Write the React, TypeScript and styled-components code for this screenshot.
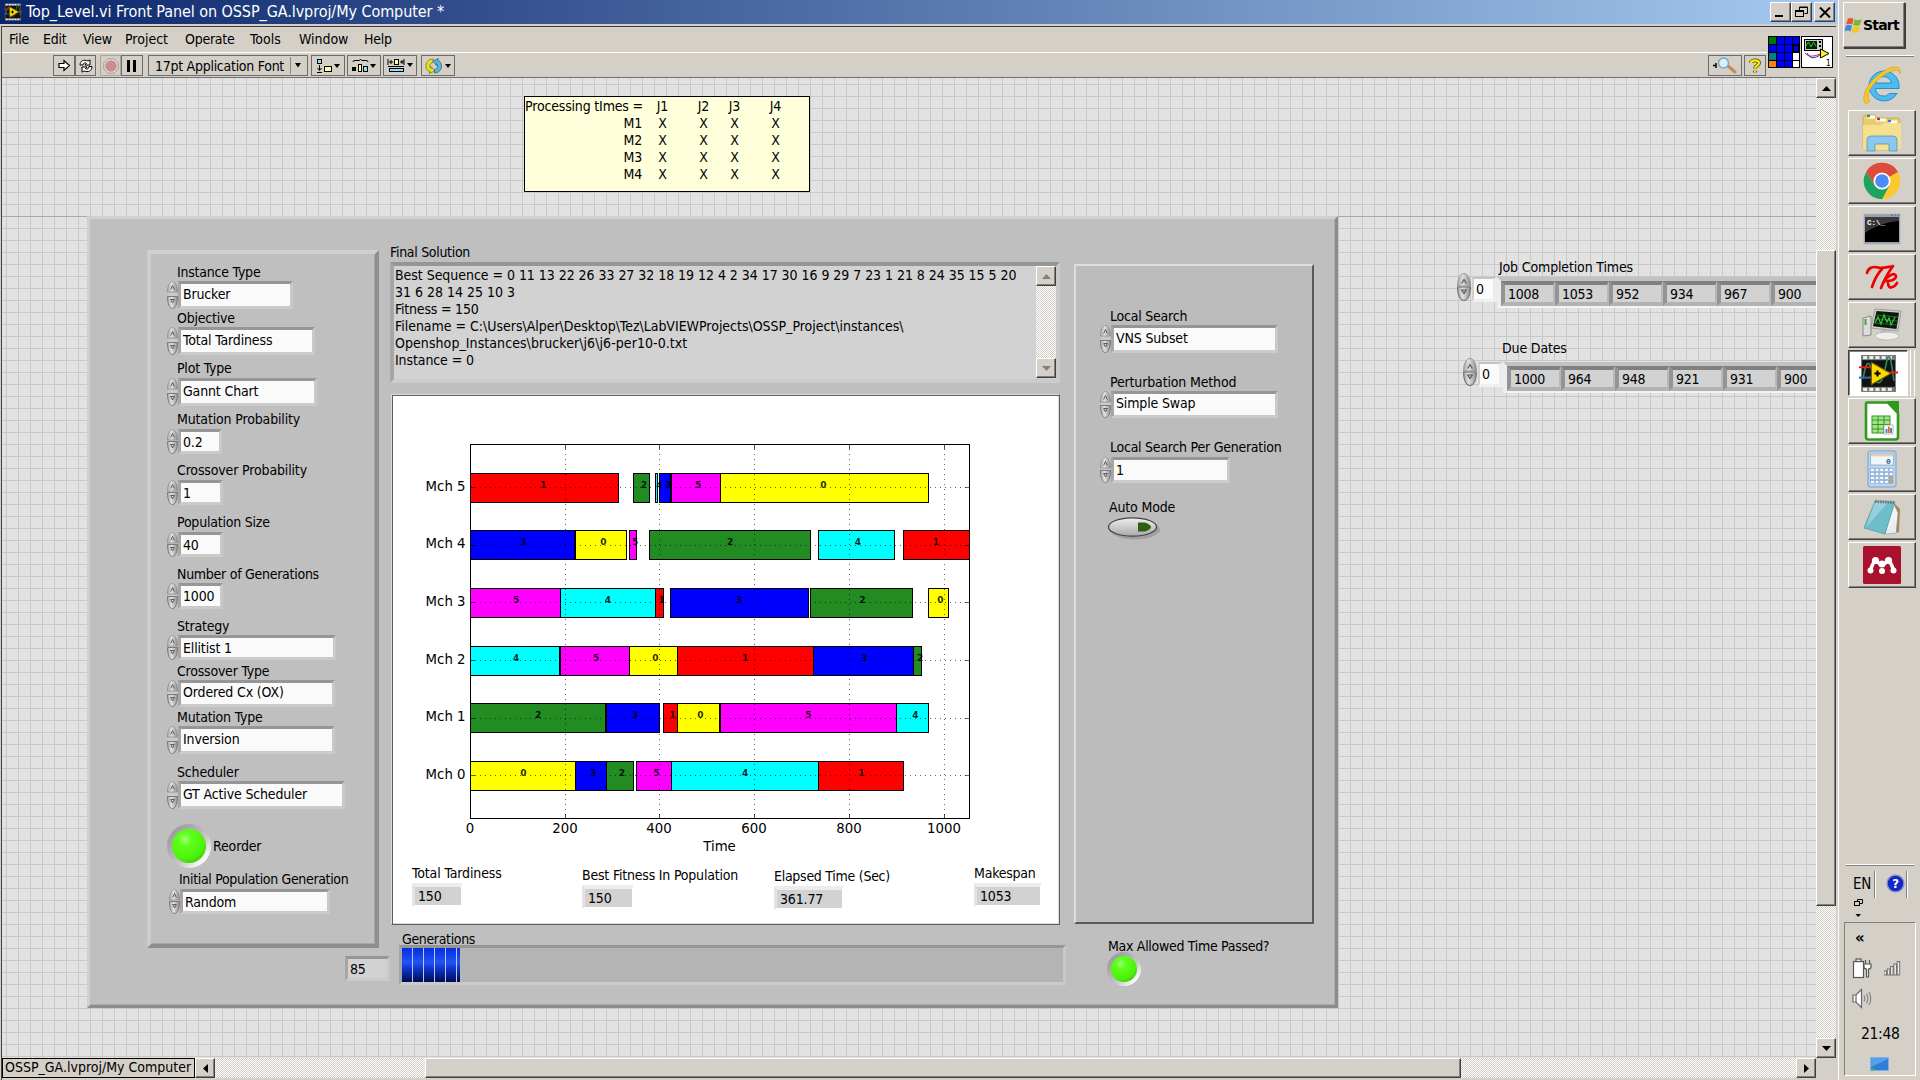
import React from "react";
import styled, { createGlobalStyle, css } from "styled-components";

const FACE = "#d4d0c8";
const UI_FONT = `"DejaVu Sans Condensed", "DejaVu Sans", "Noto Sans", sans-serif`;

const Global = createGlobalStyle`
  * { box-sizing: border-box; }
  html, body { margin: 0; padding: 0; overflow: hidden; background: ${FACE}; }
  body { font: 14px/18px ${UI_FONT}; font-stretch: condensed; letter-spacing: -0.15px; color: #000; cursor: default; }
  svg { display: block; }
`;

const raised = css`
  background: ${FACE};
  border: 1px solid;
  border-color: #fff #404040 #404040 #fff;
  box-shadow: inset -1px -1px 0 #808080;
`;
const dither = css`
  background: repeating-conic-gradient(#fff 0 25%, ${FACE} 0 50%) 0 0 / 2px 2px;
`;

/* ---------- shell ---------- */
const Screen = styled.div`
  display: flex;
  width: 1920px;
  height: 1080px;
  background: ${FACE};
  overflow: hidden;
`;
const Win = styled.div`
  display: flex;
  flex-direction: column;
  width: 1838px;
  flex: none;
  height: 1080px;
`;
const TitleBar = styled.div`
  display: flex;
  align-items: center;
  height: 24px;
  flex: none;
  padding: 0 3px 0 4px;
  background: linear-gradient(to right, #0a246a, #a6caf0);
  color: #fff;
`;
const Title = styled.div`
  flex: 1;
  margin-left: 4px;
  font-size: 16px;
  letter-spacing: -0.07px;
  white-space: pre;
  line-height: 24px;
`;
const CapButton = styled.div<{ $gap?: number }>`
  ${raised}
  width: 21px;
  height: 20px;
  margin-left: ${(p) => p.$gap ?? 0}px;
  display: flex;
  align-items: center;
  justify-content: center;
`;
const Frame = styled.div`
  display: flex;
  flex-direction: column;
  height: 1054px;
  margin: 2px 2px 0 1px;
  border-left: 1px solid #404040;
  border-top: 1px solid #404040;
`;
const HeadRow = styled.div`
  display: flex;
  height: 51px;
  flex: none;
  border-bottom: 1px solid #707070;
`;
const Bars = styled.div`
  flex: 1;
`;
const MenuBar = styled.div`
  display: flex;
  height: 26px;
  padding: 0 0 2px 7px;
  align-items: center;
  border-bottom: 1px solid #fff;
`;
const MenuItem = styled.div<{ $w: number; $ls?: number }>`
  width: ${(p) => p.$w}px;
  letter-spacing: ${(p) => p.$ls ?? -0.25}px;
`;
const ToolBar = styled.div`
  display: flex;
  height: 24px;
  padding: 2px 1px 0 51px;
`;
const ToolButton = styled.div<{ $w: number; $gap?: number; $soft?: boolean }>`
  display: flex;
  align-items: center;
  justify-content: center;
  width: ${(p) => p.$w}px;
  height: 21px;
  margin-left: ${(p) => p.$gap ?? 0}px;
  border: 1px solid ${(p) => (p.$soft ? "#aaa69e" : "#6e6c68")};
`;
const FontName = styled.div`
  flex: 1;
  padding-left: 6px;
  letter-spacing: -0.27px;
  white-space: nowrap;
`;
const FontSplit = styled.div`
  width: 17px;
  height: 17px;
  padding: 6px 0 0 4px;
  border-left: 1px solid #888;
`;
const Spacer = styled.div`
  flex: 1;
`;
const PaneIcons = styled.div`
  display: flex;
  gap: 1px;
  padding: 9px 3px 0 1px;
  width: 69px;
`;
const Body = styled.div`
  display: flex;
  height: 980px;
`;
const Canvas = styled.div`
  width: 1814px;
  height: 980px;
  overflow: hidden;
  background-color: #e2e2e2;
  background-image: linear-gradient(#a9a9a9, #a9a9a9), linear-gradient(to right, #c8c8c8 1px, transparent 1px),
    linear-gradient(#c8c8c8 1px, transparent 1px);
  background-size: 100% 1px, 12px 12px, 12px 12px;
  background-position: 0 138px, 4px 0, 0 6px;
  background-repeat: no-repeat, repeat, repeat;
`;
const VScroll = styled.div<{ $h: number; $w: number }>`
  display: flex;
  flex-direction: column;
  width: ${(p) => p.$w}px;
  height: ${(p) => p.$h}px;
  flex: none;
  ${dither}
`;
const ScrollButton = styled.div<{ $w?: number; $h?: number }>`
  ${raised}
  display: flex;
  align-items: center;
  justify-content: center;
  width: ${(p) => p.$w ?? 20}px;
  height: ${(p) => p.$h ?? 20}px;
  flex: none;
`;
const VThumb = styled.div`
  ${raised}
  height: 656px;
  margin: 152px 0 131px;
`;
const Footer = styled.div`
  display: flex;
  height: 20px;
`;
const Context = styled.div`
  width: 193px;
  height: 20px;
  border: 1px solid #000;
  padding-left: 2px;
  line-height: 17px;
  letter-spacing: 0;
  white-space: nowrap;
  overflow: hidden;
`;
const HTrack = styled.div`
  width: 1581px;
  padding-left: 210px;
  ${dither}
`;
const HThumb = styled.div`
  ${raised}
  width: 1036px;
  height: 20px;
`;

/* ---------- front panel ---------- */
const Note = styled.div`
  display: grid;
  grid-template-columns: 117px 41px 41px 21px 61px;
  grid-auto-rows: 17px;
  width: 286px;
  height: 96px;
  margin: 18px 0 24px 522px;
  padding-top: 1px;
  border: 1px solid #000;
  background: #ffffdc;
  text-align: center;
  line-height: 17px;
  letter-spacing: -0.17px;
  white-space: nowrap;
`;
const NoteHead = styled.div`
  text-align: right;
`;
const Stage = styled.div`
  display: flex;
  padding-left: 85px;
`;
const Panel = styled.div`
  display: flex;
  flex: none;
  width: 1251px;
  height: 792px;
  padding-left: 57px;
  background: #bfbfbf;
  border: 3px solid;
  border-color: #d0d0d0 #8c8c8c #8c8c8c #cfcfcf;
  box-shadow: inset -1px -1px 0 #acacac;
`;
const Column = styled.div<{ $w: number; $top: number }>`
  display: flex;
  flex-direction: column;
  flex: none;
  width: ${(p) => p.$w}px;
  padding-top: ${(p) => p.$top}px;
`;
const Group = styled.div<{ $w: number; $h: number; $flat?: boolean }>`
  display: flex;
  flex-direction: column;
  flex: none;
  width: ${(p) => p.$w}px;
  height: ${(p) => p.$h}px;
  ${(p) =>
    p.$flat
      ? css`
          padding-left: 24px;
          background: #bcbcbc;
          border: 2px solid;
          border-color: #dedede #5a5a5a #5a5a5a #dedede;
        `
      : css`
          padding-left: 16px;
          border: 4px solid;
          border-color: #d0d0d0 #8e8e8e #8e8e8e #cccccc;
          box-shadow: inset -1px -1px 0 #a8a8a8;
        `}
`;
const Ctl = styled.div<{ $gap: number; $shift?: number }>`
  margin-top: ${(p) => p.$gap}px;
  margin-left: ${(p) => p.$shift ?? 0}px;
`;
const Label = styled.div<{ $x?: number; $h?: number; $ls?: number; $gap?: number }>`
  height: ${(p) => p.$h ?? 18}px;
  line-height: 18px;
  margin-left: ${(p) => p.$x ?? 0}px;
  margin-top: ${(p) => p.$gap ?? 0}px;
  letter-spacing: ${(p) => p.$ls ?? -0.22}px;
  white-space: nowrap;
  flex: none;
`;
const CtlRow = styled.div`
  display: flex;
`;
const Field = styled.div<{ $w: number; $h: number; $grey?: boolean }>`
  display: flex;
  align-items: center;
  width: ${(p) => p.$w}px;
  height: ${(p) => p.$h}px;
  padding: 0 0 ${(p) => (p.$h >= 27 ? 3 : 0)}px 2px;
  flex: none;
  white-space: nowrap;
  background: ${(p) => (p.$grey ? "#d2d2d2" : "#fafafa")};
  border: 3px solid;
  border-top-color: #969696;
  border-left-color: #a6a6a6;
  border-right-color: #c9c9c9;
  border-bottom-color: #cbcbcb;
`;
const Counter = styled.div`
  align-self: flex-end;
  margin-top: 8px;
`;
const LedRow = styled.div`
  display: flex;
  align-items: center;
  height: 44px;
  margin-top: 15px;
  gap: 2px;
`;
const Led = styled.div<{ $size: number }>`
  display: flex;
  width: ${(p) => p.$size}px;
  height: ${(p) => p.$size}px;
  padding: ${(p) => Math.round(p.$size * 0.11)}px;
  border-radius: 50%;
  background: linear-gradient(135deg, #9a9a9a 12%, #b8b8b8 45%, #c8c8c8 60%, #ffffff 86%);
  &::before {
    content: "";
    flex: 1;
    border-radius: 50%;
    background: radial-gradient(circle at 38% 30%, #9cff78 0, #5cff1a 22%, #4df20c 62%, #35b804 88%, #2a9a02 100%);
  }
`;
const Message = styled.div`
  display: flex;
  width: 670px;
  height: 121px;
  margin-top: 1px;
  background: #d2d2d2;
  border: 4px solid;
  border-color: #969696 #c9c9c9 #cbcbcb #a6a6a6;
`;
const MessageText = styled.div`
  flex: 1;
  padding: 1px 0 0 1px;
  line-height: 17px;
  white-space: pre;
  overflow: hidden;
`;
const MessageLine = styled.div<{ $ls: number }>`
  letter-spacing: ${(p) => p.$ls}px;
`;
const Picture = styled.div`
  width: 669px;
  height: 531px;
  margin: 11px 0 0 1px;
  background: #fff;
  border: 1px solid;
  border-color: #dcdcdc #5e5e5e #5e5e5e #dcdcdc;
  box-shadow: inset 1px 1px 0 #5e5e5e, inset -1px -1px 0 #dcdcdc;
  padding: 1px;
`;
const Readouts = styled.div`
  display: flex;
  padding-left: 19px;
`;
const Readout = styled.div<{ $w: number; $top: number }>`
  width: ${(p) => p.$w}px;
  padding-top: ${(p) => p.$top}px;
`;
const Value = styled.div<{ $w: number }>`
  display: flex;
  align-items: center;
  width: ${(p) => p.$w}px;
  height: 24px;
  padding-left: 3px;
  background: #d2d2d2;
  border: solid;
  border-width: 4px 2px 2px 3px;
  border-color: #ececec #fff #fff #e4e4e4;
`;
const Progress = styled.div`
  display: flex;
  width: 667px;
  height: 40px;
  margin-left: 9px;
  background: #b4b4b4;
  border: 3px solid;
  border-color: #969696 #c9c9c9 #cbcbcb #a6a6a6;
`;
const ProgressFill = styled.div`
  width: 58px;
  background: repeating-linear-gradient(to right, transparent 0 10px, #b9c6ee 10px 11px),
    linear-gradient(#0a2de0 0%, #0f3de8 18%, #2453f4 42%, #0f35cc 60%, #041a80 85%, #020c50 100%);
`;
const Arrays = styled.div`
  padding: 42px 0 0 119px;
`;
const ArrayBlock = styled.div<{ $gap?: number; $x?: number }>`
  margin-top: ${(p) => p.$gap ?? 0}px;
  margin-left: ${(p) => p.$x ?? 0}px;
`;
const ArrayRow = styled.div<{ $gap?: number }>`
  display: flex;
  margin-top: ${(p) => p.$gap ?? 0}px;
`;
const Index = styled.div`
  width: 25px;
  height: 25px;
  margin: 4px 0 0 1px;
  padding-left: 2px;
  line-height: 21px;
  background: #fbfbfb;
  border: solid;
  border-width: 2px 4px 3px 2px;
  border-color: #c4c4c4 #ececec #f0f0f0 #d0d0d0;
`;
const ArrayShell = styled.div`
  display: flex;
  height: 31px;
  margin-top: 4px;
  border: solid;
  border-width: 4px 4px 2px 4px;
  border-color: #c2c2c2 #f2f2f2 #f2f2f2 #ededed;
`;
const Cell = styled.div`
  width: 54px;
  height: 25px;
  flex: none;
  padding-left: 3px;
  line-height: 18px;
  letter-spacing: -0.3px;
  background: #d2d2d2;
  border: solid;
  border-width: 4px 2px 4px 4px;
  border-color: #808080 #b8b8b8 #b2b2b2 #949494;
`;

/* ---------- taskbar ---------- */
const Taskbar = styled.div`
  display: flex;
  flex-direction: column;
  width: 82px;
  height: 1080px;
  padding: 2px 4px 4px 4px;
  border-left: 1px solid #fff;
`;
const StartButton = styled.div`
  ${raised}
  display: flex;
  align-items: center;
  width: 62px;
  height: 46px;
  font: bold 14px "DejaVu Sans", sans-serif;
  letter-spacing: -0.8px;
  box-shadow: inset -1px -1px 0 #808080, 1px 1px 0 #404040;
`;
const Groove = styled.div<{ $top: number }>`
  width: 68px;
  height: 2px;
  flex: none;
  margin: ${(p) => p.$top}px 0 0 3px;
  border-top: 1px solid #fff;
  border-bottom: 1px solid #808080;
`;
const Launch = styled.div`
  height: 53px;
  padding: 8px 0 0 19px;
`;
const Tasks = styled.div`
  display: flex;
  flex-direction: column;
  gap: 2px;
  padding-left: 5px;
`;
const Task = styled.div<{ $on?: boolean }>`
  display: flex;
  align-items: center;
  justify-content: center;
  width: 68px;
  height: 46px;
  ${raised}
  ${(p) =>
    p.$on &&
    css`
      width: 60px;
      background: #fff;
      border-color: #404040 #fff #fff #404040;
      box-shadow: inset 1px 1px 0 #808080, 2px 0 0 ${FACE}, 3px 0 0 #fff, 6px 0 0 ${FACE}, 7px 0 0 #fff;
    `}
`;
const LangRow = styled.div`
  display: flex;
  height: 27px;
  margin-top: 5px;
  padding-left: 10px;
`;
const Lang = styled.div`
  width: 22px;
  font: 15px/27px ${UI_FONT};
  letter-spacing: -0.4px;
  border-right: 1px solid #808080;
  box-shadow: 1px 0 0 #fff;
`;
const HelpSlot = styled.div`
  width: 32px;
  padding: 3px 0 0 11px;
  border-right: 1px solid #808080;
  box-shadow: 1px 0 0 #fff;
`;
const LangTools = styled.div`
  height: 24px;
  padding: 1px 0 0 11px;
`;
const Tray = styled.div`
  display: grid;
  grid-template-columns: 32px 32px;
  grid-template-rows: 35px 30px 38px 28px 20px;
  width: 72px;
  height: 154px;
  margin-left: 1px;
  padding-left: 7px;
  border: 1px solid;
  border-color: #808080 #fff #fff #808080;
`;
const Wide = styled.div`
  grid-column: 1 / 3;
`;
const Chevron = styled(Wide)`
  padding: 5px 0 0 3px;
  font: bold 15px/20px "DejaVu Sans", sans-serif;
`;
const Clock = styled(Wide)`
  padding-left: 9px;
  font: 15.5px/17px ${UI_FONT};
  letter-spacing: -0.35px;
`;
const DesktopSlot = styled(Wide)`
  padding: 3px 0 0 18px;
`;

/* ---------- pieces ---------- */
const Tri = ({ dir, c = "#000", s = 9 }: { dir: "u" | "d" | "l" | "r"; c?: string; s?: number }) => {
  const pts = { u: "0,7 4.5,2 9,7", d: "0,2 9,2 4.5,7", l: "7,0 2,4.5 7,9", r: "2,0 7,4.5 2,9" }[dir];
  return (
    <svg width={s} height={s} viewBox="0 0 9 9">
      <polygon points={pts} fill={c} />
    </svg>
  );
};

const Spinner = ({ h, w = 12, joined }: { h: number; w?: number; joined?: boolean }) => {
  const m = joined ? h / 2 : 11.5;
  const b = joined ? h / 2 : h - 12;
  return (
    <svg width={w} height={h + 1} viewBox={`0 0 12 ${h + 1}`} preserveAspectRatio="none">
      <defs>
        <linearGradient id="knob" x1="0" x2="1">
          <stop offset="0" stopColor="#a8a8a8" />
          <stop offset=".4" stopColor="#e0e0e0" />
          <stop offset="1" stopColor="#8e8e8e" />
        </linearGradient>
      </defs>
      {!joined && <rect x="1" y={m} width="10" height={b - m} fill="#cacaca" />}
      <path d={`M0.5 ${m - 0.5} C0.5 5 3 .5 6 .5 S11.5 5 11.5 ${m - 0.5} Z`} fill="url(#knob)" stroke="#8a8a8a" strokeWidth=".7" />
      <path d={`M0.5 ${b + 0.5} C0.5 ${h - 4} 3 ${h + 0.5} 6 ${h + 0.5} S11.5 ${h - 4} 11.5 ${b + 0.5} Z`} fill="url(#knob)" stroke="#707070" strokeWidth=".9" />
      <path d={`M4 ${m - 3} L6 ${m - 7} L8 ${m - 3}`} fill="none" stroke="#555" />
      <path d={`M4 ${b + 3.5} L6 ${b + 7} L8 ${b + 3.5} Z`} fill="none" stroke="#555" />
    </svg>
  );
};

/* lh is the caption height, which includes any space left above the field */
type ControlProps = { label: string; value: string; gap: number; w: number; h: number; shift?: number; ls?: number; lh?: number };
const Control = ({ label, value, gap, w, h, shift, ls, lh }: ControlProps) => (
  <Ctl $gap={gap} $shift={shift}>
    <Label $x={10} $ls={ls} $h={lh}>{label}</Label>
    <CtlRow>
      <Spinner h={h - 1} w={11} />
      <Field $w={w} $h={h}>{value}</Field>
    </CtlRow>
  </Ctl>
);

const settings: ControlProps[] = [
  { label: "Instance Type", value: "Brucker", gap: 9, w: 115, h: 28 },
  { label: "Objective", value: "Total Tardiness", gap: 0, w: 137, h: 28 },
  { label: "Plot Type", value: "Gannt Chart", gap: 4, w: 139, h: 28, lh: 19 },
  { label: "Mutation Probability", value: "0.2", gap: 4, w: 44, h: 25, lh: 19, ls: -0.15 },
  { label: "Crossover Probability", value: "1", gap: 7, w: 45, h: 25, lh: 19, ls: -0.15 },
  { label: "Population Size", value: "40", gap: 8, w: 45, h: 25, lh: 19 },
  { label: "Number of Generations", value: "1000", gap: 8, w: 45, h: 26, ls: -0.27 },
  { label: "Strategy", value: "Ellitist 1", gap: 8, w: 158, h: 25 },
  { label: "Crossover Type", value: "Ordered Cx (OX)", gap: 2, w: 157, h: 27 },
  { label: "Mutation Type", value: "Inversion", gap: 1, w: 157, h: 28 },
  { label: "Scheduler", value: "GT Active Scheduler", gap: 9, w: 167, h: 28, ls: -0.15 },
];

const searchSettings: ControlProps[] = [
  { label: "Local Search", value: "VNS Subset", gap: 41, w: 167, h: 28 },
  { label: "Perturbation Method", value: "Simple Swap", gap: 20, w: 167, h: 27, ls: -0.15 },
  { label: "Local Search Per Generation", value: "1", gap: 20, w: 119, h: 26, lh: 19, ls: -0.25 },
];

/* each bar: left edge, right edge, job number, x of its caption */
type Bar = [number, number, number, number];
const JOB = ["#ffff00", "#ff0000", "#228b22", "#0000ff", "#00ffff", "#ff00ff"];
const machines: { name: string; y: number; top: number; bars: Bar[] }[] = [
  { name: "Mch 5", y: 487.5, top: 473.5, bars: [[470.5, 618.5, 1, 543.3], [633.5, 649.5, 2, 644], [655.5, 657.5, 4, 659.5], [659.5, 670.5, 3, 668.3], [671.5, 720.5, 5, 698.2], [720.5, 928.5, 0, 823.3]] },
  { name: "Mch 4", y: 545.5, top: 530.5, bars: [[470.5, 574.5, 3, 523.3], [575.5, 626.5, 0, 603.3], [629.5, 636.5, 5, 635.2], [649.5, 810.5, 2, 730.2], [818.5, 894.5, 4, 858], [903.5, 969.5, 1, 936]] },
  { name: "Mch 3", y: 602.5, top: 588.5, bars: [[470.5, 560.5, 5, 516.2], [560.5, 655.5, 4, 608], [655.5, 663.5, 1, 661.3], [670.5, 808.5, 3, 739.2], [810.5, 912.5, 2, 862.3], [928.5, 948.5, 0, 940.3]] },
  { name: "Mch 2", y: 660.5, top: 646.5, bars: [[470.5, 559.5, 4, 516.2], [560.5, 629.5, 5, 596.2], [629.5, 677.5, 0, 655.3], [677.5, 813.5, 1, 745.2], [813.5, 913.5, 3, 864.2], [913.5, 921.5, 2, 920.2]] },
  { name: "Mch 1", y: 718.5, top: 703.5, bars: [[470.5, 605.5, 2, 538.2], [606.5, 659.5, 3, 635.2], [663.5, 677.5, 1, 672.4], [677.5, 719.5, 0, 700.3], [720.5, 896.5, 5, 808.3], [896.5, 928.5, 4, 915.3]] },
  { name: "Mch 0", y: 775.5, top: 761.5, bars: [[470.5, 575.5, 0, 523.3], [575.5, 606.5, 3, 593.3], [606.5, 633.5, 2, 622], [636.5, 671.5, 5, 656.4], [671.5, 818.5, 4, 745.2], [818.5, 903.5, 1, 861.4]] },
];
const ticks: [number, string][] = [[470.5, "0"], [565.5, "200"], [659.5, "400"], [754.5, "600"], [849.5, "800"], [944.5, "1000"]];

const ChartSvg = styled.svg`
  font: 13.3px "DejaVu Sans", sans-serif;
  font-stretch: normal;
  letter-spacing: 0;
`;
const BarCaptions = styled.g`
  font-size: 9px;
  font-weight: bold;
  text-anchor: middle;
  fill-opacity: 0.85;
`;

const Gantt = () => (
  <ChartSvg width="665" height="464" viewBox="393 396 665 464">
    {machines.map((m) => (
      <g key={m.name}>
        {m.bars.map(([a, b, j], i) => (
          <rect key={i} x={a} y={m.top} width={b - a} height={29} fill={JOB[j]} stroke="#000" />
        ))}
        <line x1="470" x2="969" y1={m.y} y2={m.y} stroke="#000" strokeOpacity=".6" strokeDasharray="1 4" />
        <line x1="470" x2="475" y1={m.y} y2={m.y} stroke="#000" strokeOpacity=".6" />
        <line x1="965" x2="970" y1={m.y} y2={m.y} stroke="#000" strokeOpacity=".6" />
        <text x="465.5" y={m.top + 17.4} textAnchor="end">{m.name}</text>
      </g>
    ))}
    {ticks.map(([x, t]) => (
      <g key={t}>
        {t !== "0" && <line x1={x} x2={x} y1="444" y2="818" stroke="#000" strokeOpacity=".6" strokeDasharray="1 4" />}
        <line x1={x} x2={x} y1="445" y2="449" stroke="#000" strokeOpacity=".7" />
        <line x1={x} x2={x} y1="814" y2="818" stroke="#000" strokeOpacity=".7" />
        <text x={x - 0.5} y="833.3" textAnchor="middle">{t}</text>
      </g>
    ))}
    <BarCaptions>
      {machines.map((m) => m.bars.map(([, , j, c], i) => <text key={m.name + i} x={c} y={m.top + 14.7}>{j}</text>))}
    </BarCaptions>
    <rect x="470.5" y="444.5" width="499" height="374" fill="none" stroke="#000" />
    <text x="719.5" y="851" textAnchor="middle">Time</text>
  </ChartSvg>
);

const readouts = [
  { label: "Total Tardiness", value: "150", col: 170, top: 4, w: 51, ls: -0.12 },
  { label: "Best Fitness In Population", value: "150", col: 192, top: 6, w: 52, ls: -0.2 },
  { label: "Elapsed Time (Sec)", value: "361.77", col: 200, top: 7, w: 70, ls: -0.27 },
  { label: "Makespan", value: "1053", col: 80, top: 4, w: 68, ls: -0.22 },
];

const ArrayView = ({ label, labelX, gap, x, rowGap, values }: { label: string; labelX: number; gap?: number; x?: number; rowGap?: number; values: string[] }) => (
  <ArrayBlock $gap={gap} $x={x}>
    <Label $x={labelX} $h={15} $ls={-0.15}>{label}</Label>
    <ArrayRow $gap={rowGap}>
      <Spinner h={27} w={14} joined />
      <Index>0</Index>
      <ArrayShell>
        {values.map((v, i) => <Cell key={i}>{v}</Cell>)}
      </ArrayShell>
    </ArrayRow>
  </ArrayBlock>
);

/* ---------- icons ---------- */
const FilmIcon = ({ s }: { s: number }) => (
  <svg width={s} height={s} viewBox="0 0 38 38">
    <rect x="2" y="1" width="34" height="36" fill="#777" />
    {[4, 10, 16, 22, 28].map((x) => (
      <g key={x} fill="#eee">
        <rect x={x} y="2" width="4" height="3" />
        <rect x={x} y="33" width="4" height="3" />
      </g>
    ))}
    <rect x="3" y="6" width="32" height="26" fill="#111" />
    <path d="M4 24 C8 0 11 10 14 20 S22 34 26 12 S32 12 34 26" fill="none" stroke="#2d8a5c" strokeWidth="1.6" />
    <path d="M0 13 H12 M28 18 H38" stroke="#e02020" strokeWidth="2" />
    <path d="M0 23 H12" stroke="#2a6cb0" strokeWidth="2" />
    <polygon points="12,8 31,19 12,30" fill="#ffd800" stroke="#6a5a00" />
    <path d="M15 19 H21 M18 16 V22" stroke="#000" strokeWidth="2" />
  </svg>
);
const DropTri = () => (
  <svg width="6" height="5" viewBox="0 0 6 5"><polygon points="0,0 6,0 3,4.5" fill="#000" /></svg>
);
const RunIcon = () => (
  <svg width="13" height="13" viewBox="0 0 13 13"><path d="M1 4.5 H6 V1.5 L11.5 6.5 L6 11.5 V8.5 H1 Z" fill="#fff" stroke="#000" strokeWidth="1.2" /></svg>
);
const LoopIcon = () => (
  <svg width="16" height="14" viewBox="0 0 16 14" fill="#fff" stroke="#000">
    <path d="M2 6 C2 2 6 0 10 2 L12 .8 V6 H7 L8.6 4.4 C7 3.4 5 4 5 6 Z" />
    <path d="M14 7.5 C14 12 10 13.6 6 12 L4 13.2 V8 H9 L7.4 9.6 C9 10.6 11 10 11 7.5 Z" />
  </svg>
);
const AbortIcon = () => (
  <svg width="16" height="16" viewBox="0 0 16 16"><path d="M5 .8 H11 L15.2 5 V11 L11 15.2 H5 L.8 11 V5 Z" fill="#e4dcd8" stroke="#a09a94" /><circle cx="8" cy="8" r="5.8" fill="#c98f8f" /></svg>
);
const PauseIcon = () => (
  <svg width="10" height="12" viewBox="0 0 10 12"><rect x="0" y="0" width="3" height="12" /><rect x="6" y="0" width="3" height="12" /></svg>
);
const AlignIcon = () => (
  <svg width="24" height="14" viewBox="0 0 24 14">
    <rect x="1.5" y=".5" width="4" height="4" fill="#8fe0f4" stroke="#000" />
    <path d="M3.5 6 V11 M1.5 9 L3.5 11.5 L5.5 9 M1 13.5 H6" stroke="#000" fill="none" />
    <rect x="8.5" y="7.5" width="7" height="5" fill="#ffffb0" stroke="#000" />
    <polygon points="18,5 24,5 21,9" />
  </svg>
);
const DistributeIcon = () => (
  <svg width="24" height="14" viewBox="0 0 24 14">
    <path d="M1 3 Q1 1.5 3 1.5 H7 L8.500 .5 L10 1.5 H14 Q16 1.5 16 3" fill="none" stroke="#000" />
    <rect x="0" y="8" width="4" height="4" />
    <rect x="6.500" y="5.500" width="3" height="7" fill="#ffffb0" stroke="#000" />
    <rect x="11.500" y="7.500" width="4" height="5" fill="#8fe0f4" stroke="#000" />
    <polygon points="18,5 24,5 21,9" />
  </svg>
);
const ResizeIcon = () => (
  <svg width="26" height="15" viewBox="0 0 26 15">
    <rect x="7.500" y="1.500" width="4" height="5" fill="#ffffb0" stroke="#000" />
    <path d="M1 1 V7 M17 1 V7 M2 4 H6 M13 4 H17 M4 2 V6 M15 2 V6 M1 8.500 H17" stroke="#000" fill="none" />
    <rect x="2.500" y="10.500" width="14" height="3" fill="#8fe0f4" stroke="#000" />
    <polygon points="20,5 26,5 23,9" />
  </svg>
);
const ReorderIcon = () => (
  <svg width="26" height="16" viewBox="0 0 26 16">
    <path d="M8 1 C3 1 .7 5 1 9 C1.400 11.500 3 13 5 13.500 L4 15.500 L10 13 L6 8.500 L6 10.500 C4 9 4.500 5 8 4.500 Z" fill="#e8e020" stroke="#6a6a00" strokeWidth=".7" />
    <path d="M9.500 15 C14.500 15 17 11 16.500 7 C16 4.500 14.500 3 12.500 2.500 L13.500 .5 L8 3 L11.500 7.500 L11.500 5.500 C13.500 7 13 11 9.500 11.500 Z" fill="#58b8d8" stroke="#1e5c78" strokeWidth=".7" />
    <polygon points="20,6 26,6 23,10" />
  </svg>
);
const SearchIcon = () => (
  <svg width="24" height="17" viewBox="0 0 24 17">
    <path d="M0 8.500 H3 M3 6 V11" stroke="#000" strokeWidth="1.500" />
    <path d="M15 9 L22 15" stroke="#c98a4a" strokeWidth="3" strokeLinecap="round" />
    <circle cx="10.500" cy="6" r="5" fill="#d8f0fc" stroke="#7aa6c8" strokeWidth="1.500" />
  </svg>
);
const QuestionIcon = () => (
  <svg width="12" height="16" viewBox="0 0 12 16">
    <path d="M2 5 C2 1.500 10 1.500 10 5 C10 7.500 6 7.500 6 10.500 M6 12.800 V14.600" fill="none" stroke="#444400" strokeWidth="3.800" />
    <path d="M2 5 C2 1.500 10 1.500 10 5 C10 7.500 6 7.500 6 10.500 M6 13 V14.400" fill="none" stroke="#ffee00" strokeWidth="2.200" />
  </svg>
);
const ConnectorPane = () => (
  <svg width="32" height="32" viewBox="0 0 32 32">
    <rect width="32" height="32" fill="#000" />
    <rect x="1" y="1" width="7" height="7" fill="#007800" />
    <rect x="1" y="9" width="7" height="7" fill="#0000f0" />
    <rect x="1" y="17" width="7" height="7" fill="#008080" />
    <rect x="1" y="25" width="7" height="6" fill="#ff7f10" />
    <rect x="9" y="1" width="7" height="30" fill="#0000f0" />
    <rect x="17" y="1" width="7" height="30" fill="#0000f0" />
    <rect x="9" y="8" width="15" height="1" fillOpacity=".6" /><rect x="9" y="16" width="15" height="1" fillOpacity=".6" /><rect x="9" y="24" width="15" height="1" fillOpacity=".6" />
    <rect x="25" y="1" width="6" height="7" fill="#0000f0" />
    <rect x="26" y="10" width="4" height="5" fill="#0000f0" />
    <rect x="25" y="17" width="6" height="7" fill="#fff" />
    <rect x="25" y="25" width="6" height="6" fill="#fff" />
  </svg>
);
const ViIcon = () => (
  <svg width="32" height="32" viewBox="0 0 32 32">
    <rect x=".5" y=".5" width="31" height="31" fill="#fff" stroke="#000" />
    <rect x="3.500" y="3.500" width="18" height="11" fill="#ccc" stroke="#000" />
    <rect x="5" y="5" width="11" height="8" fill="#020" />
    <path d="M5 10 L7.500 6 L10 11 L12.500 6 L15 10" fill="none" stroke="#20d020" />
    <rect x="18" y="5" width="2" height="2" /><rect x="18" y="9" width="2" height="2" />
    <path d="M4 17 C8 22 14 20 19 18" fill="none" stroke="#e02020" />
    <path d="M6 17 C10 24 14 22 19 19" fill="none" stroke="#2020d0" />
    <polygon points="19.500,13 28,17.500 19.500,22" fill="#ffee20" stroke="#000" />
    <text x="25" y="29.500" fontSize="8" fontFamily="DejaVu Sans">1</text>
  </svg>
);
const WinFlag = ({ s }: { s: number }) => (
  <svg width={s} height={s} viewBox="0 0 20 20">
    <path d="M4 3 C6 1.500 8 2 10 3 L8.700 9 C6.500 7.800 4.500 7.800 2.300 9 Z" fill="#e8542a" />
    <path d="M11 3.500 C13.500 4.800 16 4.800 18.500 3.200 L17 9.300 C14.500 10.800 12 10.600 9.700 9.500 Z" fill="#7ab82e" />
    <path d="M2 10.200 C4 9 6.500 9 8.400 10.200 L7 16.200 C5 15 3 15 .6 16.300 Z" fill="#3f8ad8" />
    <path d="M9.400 10.700 C11.800 11.900 14.300 11.800 16.700 10.500 L15.200 16.700 C12.700 18 10.400 17.800 8 16.700 Z" fill="#f8c420" />
  </svg>
);
const IeIcon = () => (
  <svg width="40" height="40" viewBox="0 0 40 40">
    <path d="M37 22 A15 15 0 1 0 35 28.500 H27.500 A8 8 0 0 1 13.500 23.500 H37 Z M13.500 18 A8.200 8.200 0 0 1 29.500 18 Z" fill="#4dbdf0" stroke="#1c86c4" strokeWidth=".9" fillRule="evenodd" />
    <path d="M3 38 C-2 31 8 14 22 6 C32 0 40 1 38 9 C37 3 30 5 22 10 C10 18 2 31 8 36 C5.500 38.500 4 39 3 38 Z" fill="#f6c62a" stroke="#d09a10" strokeWidth=".6" />
  </svg>
);
const FolderIcon = () => (
  <svg width="42" height="40" viewBox="0 0 42 40">
    <path d="M2 5 Q2 2 5 2 H14 L16 5 H36 Q39 5 39 8 V34 Q39 37 36 37 H5 Q2 37 2 34 Z" fill="#e8cc70" stroke="#c4a040" strokeWidth=".7" />
    <path d="M6 4 H14 M15 7 H25 M27 9 H36" stroke="#fff" strokeWidth="3" />
    <path d="M6 3 H9" stroke="#30a030" strokeWidth="2.500" /><path d="M16 6 H19" stroke="#d03020" strokeWidth="2.500" /><path d="M27 8 H30" stroke="#3080d0" strokeWidth="2.500" />
    <path d="M2 12 H20 L23 10 H40 V34 Q40 37 37 37 H5 Q2 37 2 34 Z" fill="#f6e08e" />
    <path d="M6 38 V27 Q6 23 10 23 H32 Q36 23 36 27 V38 H28 V31 H14 V38 Z" fill="#8ac8ec" stroke="#4c98c8" strokeWidth=".8" />
  </svg>
);
const ChromeIcon = () => (
  <svg width="38" height="38" viewBox="0 0 48 48">
    <circle cx="24" cy="24" r="23" fill="#fbc92f" />
    <path d="M24 24 L4.080 12.500 A23 23 0 0 1 43.900 12.500 Z" fill="#dd4b3e" />
    <path d="M24 13 H44.200 A23 23 0 0 0 4.080 12.500 L14.500 29.500 Z" fill="#dd4b3e" />
    <path d="M4.080 12.500 A23 23 0 0 0 24 47 L33.500 29.500 L24 35 L14.500 29.500 Z" fill="#1da462" />
    <circle cx="24" cy="24" r="10.800" fill="#fff" /><circle cx="24" cy="24" r="8.600" fill="#4c8bf5" />
  </svg>
);
const CmdIcon = () => (
  <svg width="38" height="32" viewBox="0 0 38 32">
    <rect x=".7" y=".7" width="36.600" height="30.600" fill="#9aa0a8" stroke="#c4c8cc" />
    <path d="M28 2 H30 M31.500 2 H33.500 M35 2 H36.500" stroke="#4060a0" />
    <rect x="2" y="4" width="34" height="25" fill="#000" />
    <path d="M2 4 H36 V8 C22 9 10 14 2 20 Z" fill="#3a3a3a" />
    <text x="4" y="12" fontSize="7.500" fontWeight="bold" fill="#fff" fontFamily="Liberation Mono" letterSpacing="0">C:\_</text>
  </svg>
);
const TkIcon = () => (
  <svg width="34" height="26" viewBox="0 0 34 26" fill="none" stroke="#ee0000" strokeWidth="2.700" strokeLinecap="round" strokeLinejoin="round">
    <path d="M2 9 C3 4 8 2 13 3.500 C18 5 22 3 26 2.500" /><path d="M17 5 C12 10 9 17 7 23" />
    <path d="M28 2 C23 9 19 16 16 24" /><path d="M19 18 C23 11 30 8 31 12 C31 16 25 17 22 17 C24 18 22 24 26 23.500 C29 23 31 21 32 19" />
  </svg>
);
const PcIcon = () => (
  <svg width="40" height="34" viewBox="0 0 40 34">
    <path d="M1 10 L9 8 V27 L1 28 Z" fill="#dcdcdc" stroke="#777" strokeWidth=".8" /><rect x="2.500" y="11" width="2" height="6" fill="#30b030" />
    <path d="M13 1 L39 3 L36 23 L9 20 Z" fill="#cfcfcf" stroke="#888" strokeWidth=".7" />
    <path d="M14.500 3 L37 4.800 L34.500 21 L11 18.300 Z" fill="#0a1a0a" />
    <path d="M14 7 L36 9 M13 11 L35.500 13 M12.500 15 L35 17" stroke="#2f5f2f" />
    <path d="M13 15 L16 9 L19 16 L22 7 L25 14 L27 10 L29 17 L33 9" fill="none" stroke="#2ec82e" strokeWidth="1.200" />
    <path d="M19 21.500 L27 22.500 L28 26 H18 Z" fill="#bbb" /><ellipse cx="25" cy="28" rx="12" ry="4" fill="#eee" stroke="#aaa" strokeWidth=".7" />
  </svg>
);
const CalcSheetIcon = () => (
  <svg width="36" height="40" viewBox="0 0 36 40">
    <path d="M3 1.500 H24 L34 12 V36 Q34 38.500 31.500 38.500 H4.500 Q2 38.500 2 36 V3.500 Q2 1.500 3 1.500 Z" fill="#fff" stroke="#2f9a1e" strokeWidth="2.600" />
    <path d="M23 0 H35 V12 Z" fill="#2f9a1e" />
    <rect x="8" y="15" width="18" height="17" fill="#a8e090" stroke="#2f9a1e" />
    <path d="M8 19 H26 M8 23.500 H26 M8 28 H26 M14 15 V32 M20 15 V32" stroke="#2f9a1e" />
    <rect x="20" y="24" width="9" height="9" fill="#fff" stroke="#999" strokeWidth=".7" />
    <path d="M22.500 32 V28 M27 32 V27" stroke="#3c78c8" strokeWidth="1.800" /><path d="M24.800 32 V25.500" stroke="#e86820" strokeWidth="1.800" />
  </svg>
);
const CalculatorIcon = () => (
  <svg width="30" height="38" viewBox="0 0 30 38">
    <rect x="1" y="1" width="28" height="36" rx="2" fill="#b8d4f0" stroke="#7aa0c8" />
    <rect x="3.500" y="4" width="23" height="11" fill="#eef6fc" stroke="#8ab0d0" strokeWidth=".8" />
    <path d="M4 5.500 H26" stroke="#f4c890" strokeWidth="1.600" />
    <text x="19" y="14" fontSize="8" fontFamily="Liberation Mono" fontWeight="bold" fill="#345a8c">0</text>
    {[18.5, 22.5, 26.5, 30.5].map((y) => [3.5, 8.2, 12.9, 17.6, 22.3].map((x) => <rect key={`${x}-${y}`} x={x} y={y} width="3.600" height="2.700" fill={x > 22 && y > 25 ? "#f0a030" : "#fff"} stroke="#6a94c4" strokeWidth=".5" />))}
  </svg>
);
const NotepadIcon = () => (
  <svg width="38" height="36" viewBox="0 0 38 36">
    <path d="M31 4 L37 10 L36 33 L28 35 Z" fill="#a08850" />
    <path d="M30 3 L35 14 L33 34 L22 35 Z" fill="#f4f4f4" stroke="#999" strokeWidth=".6" />
    <path d="M12 2 L32 3 L22 35 L1 29 Z" fill="#6fbccb" stroke="#4a98a8" strokeWidth=".7" />
    <path d="M12 3 L25 3.500 L3 28 Z" fill="#a4dae4" opacity=".7" />
    <path d="M12 2.500 L32 3.500" stroke="#777" strokeWidth="3" strokeDasharray="1.500 1" />
    <path d="M23 34 L32 18 L33 33 Z" fill="#e4eef4" />
  </svg>
);
const MendeleyIcon = () => (
  <svg width="38" height="38" viewBox="0 0 38 38">
    <rect width="38" height="38" rx="1.500" fill="#a9112c" />
    <path d="M7.500 24 C9 21 9 17 12.500 15 L19 19 L25.500 15 C29 17 29 21 30.500 24" fill="none" stroke="#fff" strokeWidth="3.600" />
    <circle cx="12.500" cy="14.500" r="3.600" fill="#fff" /><circle cx="25.500" cy="14.500" r="3.600" fill="#fff" /><circle cx="19" cy="18" r="3.600" fill="#fff" />
    <circle cx="7.500" cy="24.500" r="3" fill="#fff" /><circle cx="19" cy="25" r="3" fill="#fff" /><circle cx="30.500" cy="24.500" r="3" fill="#fff" />
  </svg>
);
const SwitchIcon = () => (
  <svg width="54" height="26" viewBox="0 0 54 26">
    <defs>
      <linearGradient id="sw" x1="0" x2="0" y1="0" y2="1"><stop offset="0" stopColor="#f0f0f0" /><stop offset="1" stopColor="#a8a8a8" /></linearGradient>
    </defs>
    <ellipse cx="28" cy="13.500" rx="25" ry="10" fill="#8e8e8e" opacity=".6" />
    <ellipse cx="25.500" cy="11" rx="24" ry="9.200" fill="url(#sw)" stroke="#444" strokeWidth="1.300" />
    <path d="M31 6.500 H38 Q43.500 8.500 44 11 Q43.500 13.500 38 15.500 H31 Z" fill="#2f5e12" />
  </svg>
);

const tasks: { icon: React.ReactNode; on?: boolean }[] = [
  { icon: <FolderIcon /> },
  { icon: <ChromeIcon /> },
  { icon: <CmdIcon /> },
  { icon: <TkIcon /> },
  { icon: <PcIcon /> },
  { icon: <FilmIcon s={39} />, on: true },
  { icon: <CalcSheetIcon /> },
  { icon: <CalculatorIcon /> },
  { icon: <NotepadIcon /> },
  { icon: <MendeleyIcon /> },
];

const menus: [string, number, number?][] = [["File", 34], ["Edit", 40], ["View", 42], ["Project", 60, 0], ["Operate", 65], ["Tools", 49, 0], ["Window", 65, -0.05], ["Help", 40]];

const solution: [string, number][] = [
  ["Best Sequence = 0 11 13 22 26 33 27 32 18 19 12 4 2 34 17 30 16 9 29 7 23 1 21 8 24 35 15 5 20", -0.04],
  ["31 6 28 14 25 10 3", 0],
  ["Fitness = 150", -0.2],
  ["Filename = C:\\Users\\Alper\\Desktop\\Tez\\LabVIEWProjects\\OSSP_Project\\instances\\", -0.02],
  ["Openshop_Instances\\brucker\\j6\\j6-per10-0.txt", 0.07],
  ["Instance = 0", -0.1],
];

export default function App() {
  return (
    <Screen>
      <Global />
      <Win>
        <TitleBar>
          <FilmIcon s={18} />
          <Title>Top_Level.vi Front Panel on OSSP_GA.lvproj/My Computer *</Title>
          <CapButton><svg width="11" height="11"><rect x="0" y="8" width="8" height="2" /></svg></CapButton>
          <CapButton>
            <svg width="13" height="12" fill="none" stroke="#000"><path d="M4.500 4 V1 H12.500 V7.500 H9.500 M4 1.500 H13" /><rect x=".5" y="5.500" width="8" height="5" /><path d="M0 5 H9" strokeWidth="2" /></svg>
          </CapButton>
          <CapButton $gap={2}><svg width="12" height="11"><path d="M1 .5 L11 10.500 M11 .5 L1 10.500" stroke="#000" strokeWidth="2" /></svg></CapButton>
        </TitleBar>
        <Frame>
          <HeadRow>
            <Bars>
              <MenuBar>{menus.map(([m, w, ls]) => <MenuItem key={m} $w={w} $ls={ls}>{m}</MenuItem>)}</MenuBar>
              <ToolBar>
                <ToolButton $w={22}><RunIcon /></ToolButton>
                <ToolButton $w={21}><LoopIcon /></ToolButton>
                <ToolButton $w={21} $gap={4} $soft><AbortIcon /></ToolButton>
                <ToolButton $w={22}><PauseIcon /></ToolButton>
                <ToolButton $w={160} $gap={5}>
                  <FontName>17pt Application Font</FontName>
                  <FontSplit><DropTri /></FontSplit>
                </ToolButton>
                <ToolButton $w={34} $gap={3}><AlignIcon /></ToolButton>
                <ToolButton $w={34} $gap={2}><DistributeIcon /></ToolButton>
                <ToolButton $w={34} $gap={2}><ResizeIcon /></ToolButton>
                <ToolButton $w={34} $gap={4}><ReorderIcon /></ToolButton>
                <Spacer />
                <ToolButton $w={34}><SearchIcon /></ToolButton>
                <ToolButton $w={22} $gap={2}><QuestionIcon /></ToolButton>
              </ToolBar>
            </Bars>
            <PaneIcons><ConnectorPane /><ViIcon /></PaneIcons>
          </HeadRow>
          <Body>
            <Canvas>
              <Note>
                <NoteHead>Processing tImes =</NoteHead><div>J1</div><div>J2</div><div>J3</div><div>J4</div>
                {["M1", "M2", "M3", "M4"].map((m) => (
                  <React.Fragment key={m}>
                    <NoteHead>{m}</NoteHead><div>X</div><div>X</div><div>X</div><div>X</div>
                  </React.Fragment>
                ))}
              </Note>
              <Stage>
                <Panel>
                  <Column $w={243} $top={31}>
                    <Group $w={232} $h={698}>
                      {settings.map((s) => <Control key={s.label} {...s} />)}
                      <LedRow><Led $size={44} />Reorder</LedRow>
                      <Control label="Initial Population Generation" value="Random" gap={2} w={150} h={25} shift={2} ls={-0.34} lh={19} />
                    </Group>
                    <Counter><Field $w={45} $h={25} $grey>85</Field></Counter>
                  </Column>
                  <Column $w={684} $top={24}>
                    <Label $ls={-0.3}>Final Solution</Label>
                    <Message>
                      <MessageText>{solution.map(([t, ls]) => <MessageLine key={t} $ls={ls}>{t}</MessageLine>)}</MessageText>
                      <VScroll $w={20} $h={112}>
                        <ScrollButton $h={20}><Tri dir="u" c="#808080" /></ScrollButton>
                        <Spacer />
                        <ScrollButton $h={20}><Tri dir="d" c="#808080" /></ScrollButton>
                      </VScroll>
                    </Message>
                    <Picture>
                      <Gantt />
                      <Readouts>
                        {readouts.map((r) => (
                          <Readout key={r.label} $w={r.col} $top={r.top}>
                            <Label $ls={r.ls} $h={19}>{r.label}</Label>
                            <Value $w={r.w}>{r.value}</Value>
                          </Readout>
                        ))}
                      </Readouts>
                    </Picture>
                    <Label $x={12} $h={15} $gap={5} $ls={-0.35}>Generations</Label>
                    <Progress><ProgressFill /></Progress>
                  </Column>
                  <Column $w={260} $top={45}>
                    <Group $w={240} $h={660} $flat>
                      {searchSettings.map((s) => <Control key={s.label} {...s} />)}
                      <Ctl $gap={15} $shift={7}>
                        <Label $x={2} $ls={-0.15}>Auto Mode</Label>
                        <SwitchIcon />
                      </Ctl>
                    </Group>
                    <Ctl $gap={13} $shift={33}>
                      <Label $x={1} $h={15} $ls={-0.3}>Max Allowed Time Passed?</Label>
                      <Led $size={34} />
                    </Ctl>
                  </Column>
                </Panel>
                <Arrays>
                  <ArrayView label="Job Completion Times" labelX={42} values={["1008", "1053", "952", "934", "967", "900"]} />
                  <ArrayView label="Due Dates" labelX={39} gap={31} x={6} rowGap={4} values={["1000", "964", "948", "921", "931", "900"]} />
                </Arrays>
              </Stage>
            </Canvas>
            <VScroll $w={20} $h={980}>
              <ScrollButton><Tri dir="u" /></ScrollButton>
              <VThumb />
              <Spacer />
              <ScrollButton><Tri dir="d" /></ScrollButton>
            </VScroll>
          </Body>
          <Footer>
            <Context>OSSP_GA.lvproj/My Computer</Context>
            <ScrollButton><Tri dir="l" /></ScrollButton>
            <HTrack><HThumb /></HTrack>
            <ScrollButton><Tri dir="r" /></ScrollButton>
          </Footer>
        </Frame>
      </Win>
      <Taskbar>
        <StartButton><WinFlag s={19} />Start</StartButton>
        <Groove $top={7} />
        <Launch><IeIcon /></Launch>
        <Tasks>{tasks.map((t, i) => <Task key={i} $on={t.on}>{t.icon}</Task>)}</Tasks>
        <Spacer />
        <Groove $top={0} />
        <LangRow>
          <Lang>EN</Lang>
          <HelpSlot>
            <svg width="19" height="19" viewBox="0 0 19 19">
              <circle cx="9.500" cy="9.500" r="8.500" fill="#1428c8" stroke="#8c98c8" strokeWidth="1.400" />
              <text x="9.500" y="14.300" textAnchor="middle" fontSize="13" fontWeight="bold" fill="#fff" fontFamily="DejaVu Sans">?</text>
            </svg>
          </HelpSlot>
        </LangRow>
        <LangTools>
          <svg width="9" height="20" viewBox="0 0 9 20" fill="none" stroke="#000">
            <path d="M3.500 3 V.5 H8.500 V4.500 H6" /><rect x=".5" y="2.500" width="5" height="4" /><polygon points="1.500,15 7,15 4.200,18" fill="#000" stroke="none" />
          </svg>
        </LangTools>
        <Tray>
          <Chevron>«</Chevron>
          <svg width="20" height="21" viewBox="0 0 20 21" fill="#fff" stroke="#555" strokeWidth="1.200">
            <rect x="1.500" y="3.500" width="10" height="16" /><rect x="4" y="1" width="5" height="2.500" />
            <path d="M12 6 H19 V9 Q19 11 16.500 11 V19 H14.500 V11 Q12 11 12 9 Z M13.500 6 V2 M17.500 6 V2" />
          </svg>
          <svg width="18" height="18" viewBox="0 0 18 18" fill="#eee" stroke="#666" strokeWidth=".9">
            <rect x="0" y="13" width="2.500" height="4" /><rect x="3.300" y="11" width="2.500" height="6" /><rect x="6.600" y="8.500" width="2.500" height="8.500" /><rect x="9.900" y="6" width="2.500" height="11" /><rect x="13.200" y="3.500" width="2.500" height="13.500" />
          </svg>
          <Wide>
            <svg width="21" height="21" viewBox="0 0 21 21" fill="none" stroke="#666" strokeWidth="1.200">
              <path d="M1 7 H4 L9.500 1.500 V19.500 L4 14 H1 Z M4 7 V14" fill="#fff" />
              <path d="M12 7.500 Q13.500 10.500 12 13.500 M14.500 5.500 Q17 10.500 14.500 15.500 M17 4 Q20.500 10.500 17 17" stroke="#888" />
            </svg>
          </Wide>
          <Clock>21:48</Clock>
          <DesktopSlot>
            <svg width="19" height="14" viewBox="0 0 19 14"><rect x=".5" y=".5" width="18" height="13" fill="#2f7ed8" stroke="#7fb0e8" /><path d="M1 10 L18 2 V1 H1 Z" fill="#6aaef0" opacity=".7" /><rect x="1" y="11.500" width="3" height="2" fill="#50b050" /></svg>
          </DesktopSlot>
        </Tray>
      </Taskbar>
    </Screen>
  );
}
